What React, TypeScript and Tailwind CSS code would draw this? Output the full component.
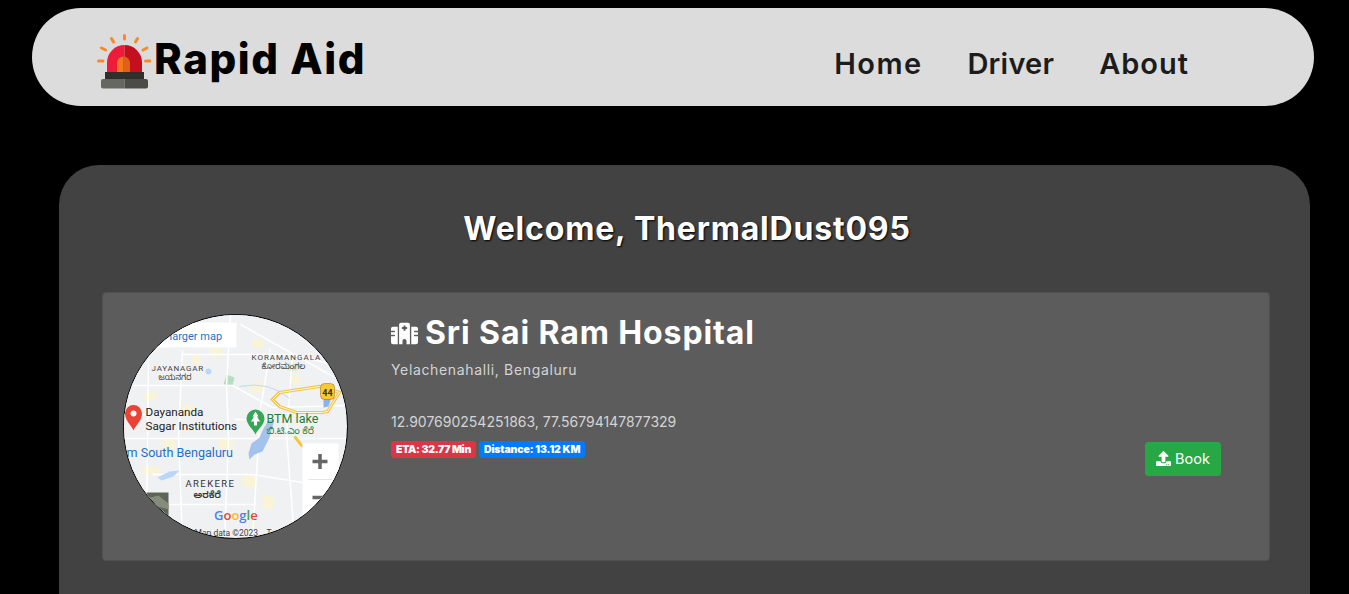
import { FaUpload } from "react-icons/fa";
import { FaHospital } from "react-icons/fa6";

const KN = "'Noto Sans', 'Noto Sans Kannada', 'Liberation Sans', sans-serif";

function Beacon() {
  return (
    <svg width="54" height="56" viewBox="0 0 54 56" className="mt-2 shrink-0">
      <g stroke="#f58a2a" strokeWidth="3" strokeLinecap="round">
        <path d="M27.500 2.500v3.500" />
        <path d="M14.500 5.500l2 3.500" />
        <path d="M40.500 5.500l-2 3.500" />
        <path d="M4.500 15l4 2" />
        <path d="M50 15l-4 2" />
        <path d="M1.500 28h4.500" />
        <path d="M48.500 28h4.500" />
      </g>
      <path d="M10 39v-9.500a17.500 17.500 0 0 1 17.500-17.500v27z" fill="#ee1c3a" />
      <path d="M45 39v-9.500a17.500 17.500 0 0 0-17.500-17.500v27z" fill="#c40f1f" />
      <path d="M20 39v-9a6.500 6.500 0 0 1 6.500-6.500V39z" fill="#f7791d" />
      <path d="M33 39v-9a6.500 6.500 0 0 0-6.500-6.500V39z" fill="#e0601a" />
      <rect x="8" y="39" width="39" height="7" fill="#2f2f2c" />
      <path d="M4 48a2 2 0 0 1 2-2h21.500v9.500H6a2 2 0 0 1-2-2z" fill="#676762" />
      <path d="M51 48a2 2 0 0 0-2-2H27.500v9.500H49a2 2 0 0 0 2-2z" fill="#4b4c47" />
    </svg>
  );
}

function MapCircle() {
  return (
    <div className="h-[225px] w-[225px] shrink-0 overflow-hidden rounded-full border-[1.5px] border-black bg-[#eef0f2]">
      <svg width="222" height="222" viewBox="1.500 0.500 222 222" className="block">
        <rect x="0" y="0" width="225" height="225" fill="#f0f1f3" />
        {/* parks */}
        <path d="M185 18l15 6 8 16-14-6z" fill="#cdead3" />
        <path d="M104 60l8 3-2 8-9-1z" fill="#b4dfc0" />
        <path d="M52 28h16v5H52z" fill="#c4e6cd" />
        <path d="M165 49h10v7h-10z" fill="#cdead3" />
        <circle cx="86" cy="57" r="3" fill="#bcd6f8" />
        {/* yellow patches */}
        <g fill="#f9f4d8">
          <path d="M20 80l12-4 4 8-14 3z" />
          <path d="M125 70l14-3 3 9-12 3z" />
          <path d="M86 34l12-2 2 10-10 1z" />
          <path d="M60 90h12v9H60z" />
          <path d="M130 24l12 2-2 8-10-1z" />
          <path d="M96 122l16 3-2 10-14-2z" />
          <path d="M20 152h16v8H20z" />
          <path d="M120 160l14 2-2 12-12-2z" />
          <path d="M168 60l10 1-1 9-10-1z" />
          <path d="M40 124l14 2-2 9-12-1z" />
          <path d="M70 40l8 1-1 9-8-1z" />
          <path d="M140 180l12 2-2 14-10-3z" />
        </g>
        {/* roads */}
        <g stroke="#ffffff" fill="none" strokeWidth="1.500">
          <path d="M0 71h110l40 22 75-2" />
          <path d="M0 124h225" />
          <path d="M30 160h100l50 8" />
          <path d="M108 0l-4 71 2 53-4 101" />
          <path d="M60 36l-4 88 4 101" />
          <path d="M26 40l-2 180" />
          <path d="M148 34l-10 60-8 131" />
          <path d="M118 10l107 60" />
          <path d="M60 40h110l40 10" />
          <path d="M170 40l-6 80 8 105" />
          <path d="M0 100h60M112 105h40" />
          <path d="M24 190h110" />
        </g>
        <path d="M117 72q30-6 50 12" stroke="#c5d8f0" fill="none" strokeWidth="1" />
        {/* lake */}
        <path d="M146 106l6-1-5 18-7 14-8 3-5 5-1-6 3-10 8-6 4-9z" fill="#a3c3ee" />
        <path d="M35 163l12-6 10-1-6 6-12 4z" fill="#bcd6f8" />
        <path d="M28 187l5-6 5 8z" fill="#bcd6f8" />
        <path d="M172 216l10-3-2 9z" fill="#bcd6f8" />
        <path d="M201 84l8-1-3 9-5 1z" fill="#8ab4f0" />
        {/* ring road */}
        <path d="M150 85l7-7 40-6 20 6-12 19-5 1h-26l-17-6z" fill="none" stroke="#f2c744" strokeWidth="3.200" />
        <path d="M150 85l7-7 40-6 20 6-12 19-5 1h-26l-17-6z" fill="none" stroke="#fdf6d8" strokeWidth="1" />
        <path d="M172 122l8 10" stroke="#f2c744" strokeWidth="3" />
        <rect x="198" y="69" width="14" height="16" rx="4" fill="#f9c933" stroke="#8b6f20" strokeWidth="0.500" />
        <text x="205" y="81" textAnchor="middle" fontSize="9" fontWeight="700" fill="#333" fontFamily="Roboto, sans-serif">44</text>
        {/* labels */}
        <g fontFamily="Roboto, sans-serif">
          <rect x="-2" y="8" width="116" height="25" fill="#ffffff" />
          <text x="47" y="25" fontSize="11" fill="#1a73c8">larger map</text>
          <text x="129" y="45" fontSize="8" letterSpacing="1" fill="#444">KORAMANGALA</text>
          <text x="139" y="54" fontSize="8" fill="#333" fontFamily={KN}>ಕೋರಮಂಗಲ</text>
          <text x="29" y="56" fontSize="8" letterSpacing="0.800" fill="#444">JAYANAGAR</text>
          <text x="36" y="65" fontSize="8" fill="#333" fontFamily={KN}>ಜಯನಗರ</text>
          <text x="23" y="101" fontSize="11.700" fill="#222">Dayananda</text>
          <text x="23" y="115" fontSize="11.700" fill="#222">Sagar Institutions</text>
          <text x="144" y="108" fontSize="12.500" fill="#188038">BTM lake</text>
          <text x="144" y="119" fontSize="9.500" fill="#188038" fontFamily={KN}>ಬಿ.ಟಿ.ಎಂ ಕೆರೆ</text>
          <text x="4" y="142" fontSize="12.600" fill="#1a73c8">m South Bengaluru</text>
          <text x="63" y="172" fontSize="9.500" letterSpacing="1.400" fill="#333">AREKERE</text>
          <text x="71" y="183" fontSize="9.500" fontWeight="600" fill="#333" fontFamily={KN}>ಅರಕೆರೆ</text>
          <text x="72" y="221" fontSize="8.500" fill="#444">Map data ©2023</text>
          <text x="144" y="221" fontSize="8.500" fill="#444">Terms</text>
          <text x="91.500" y="205" fontSize="13" fontWeight="600" fontFamily="'Open Sans', sans-serif">
            <tspan fill="#4285f4">G</tspan>
            <tspan fill="#ea4335">o</tspan>
            <tspan fill="#fbbc05">o</tspan>
            <tspan fill="#4285f4">g</tspan>
            <tspan fill="#34a853">l</tspan>
            <tspan fill="#ea4335">e</tspan>
          </text>
        </g>
        {/* pins */}
        <path d="M11 116c-2-5-8.500-10-8.500-17a8.500 8.500 0 0 1 17 0c0 7-6.500 12-8.500 17z" fill="#ea4335" />
        <circle cx="11" cy="99" r="3" fill="#fff" />
        <path d="M133 120c-2-5-9-10-9-16a9 9 0 0 1 18 0c0 6-7 11-9 16z" fill="#34a853" />
        <path d="M133 97l3 5h-1.500l3 5h-3v4h-3v-4h-3l3-5H130z" fill="#fff" />
        {/* satellite thumb */}
        <rect x="24" y="178" width="22" height="30" fill="#5d6556" />
        <path d="M24 184l12-3 10 8v6l-14-4-8 4z" fill="#858c7c" />
        {/* zoom control */}
        <rect x="180" y="129" width="36" height="80" fill="#ffffff" />
        <path d="M190 147h15M197.500 139.500v15" stroke="#666" strokeWidth="3.500" />
        <path d="M186 165h24" stroke="#e6e6e6" strokeWidth="1" />
        <path d="M190 183h15" stroke="#666" strokeWidth="3.500" />
      </svg>
    </div>
  );
}

export default function App() {
  return (
    <div className="h-[594px] overflow-hidden bg-black pt-2 font-['Inter','Liberation_Sans',sans-serif]">
      <nav className="ml-8 mr-[35px] flex h-[98px] items-center justify-between rounded-[49px] bg-[#dcdcdc] pl-[65px] pr-[125px]">
        <div className="flex items-center">
          <Beacon />
          <span className="ml-[3px] mt-1 text-[42px] leading-none font-extrabold tracking-[1.55px] text-black">Rapid Aid</span>
        </div>
        <div className="mt-3 flex gap-[45px] text-[29px] leading-none font-semibold text-[#1c1c1c]">
          <a className="tracking-[1.4px]">Home</a>
          <a className="tracking-[0.2px]">Driver</a>
          <a className="tracking-[1px]">About</a>
        </div>
      </nav>

      <main className="mt-[59px] ml-[59px] w-[1251px] rounded-t-[40px] bg-[#424242] pl-[43px] pr-[40px] pb-10">
        <h1 className="pt-[46px] pl-[2px] text-center text-[32px] leading-9 font-bold tracking-[0.8px] text-white [text-shadow:1px_1px_2px_#000]">
          Welcome, ThermalDust095
        </h1>

        <section className="mt-[45px] flex h-[269px] rounded-[4px] border border-[#505050] bg-[#5c5c5c] pl-[20px]">
          <div className="mt-[21px]">
            <MapCircle />
          </div>
          <div className="ml-[43px] w-[560px] pt-[20px]">
            <h2 className="flex items-center text-[32px] leading-10 font-bold tracking-[0.9px] text-white">
              <FaHospital className="mr-[7px] text-[27px]" />
              Sri Sai Ram Hospital
            </h2>
            <p className="mt-[7px] text-[14px] leading-5 tracking-[0.65px] text-[#d4d4d4]">Yelachenahalli, Bengaluru</p>
            <p className="mt-8 text-[14px] leading-5 text-[#d4d4d4]">12.907690254251863, 77.56794147877329</p>
            <div className="mt-[9px] flex gap-[3px] text-[10.500px] leading-[11px] font-black text-white">
              <span className="rounded-[3px] bg-[#dc3545] px-[5px] py-[3px] tracking-[-0.3px]">ETA: 32.77 Min</span>
              <span className="rounded-[3px] bg-[#007bff] px-[5px] py-[3px] tracking-[-0.15px]">Distance: 13.12 KM</span>
            </div>
          </div>
          <div className="ml-auto mr-[48px] flex items-center pt-[65px]">
            <button className="flex h-[34px] w-[76px] items-center justify-center gap-1 rounded-[3px] border border-[#28a745] bg-[#28a745] pb-px text-[14.500px] text-white">
              <FaUpload className="text-[15px]" />
              Book
            </button>
          </div>
        </section>
      </main>
    </div>
  );
}
